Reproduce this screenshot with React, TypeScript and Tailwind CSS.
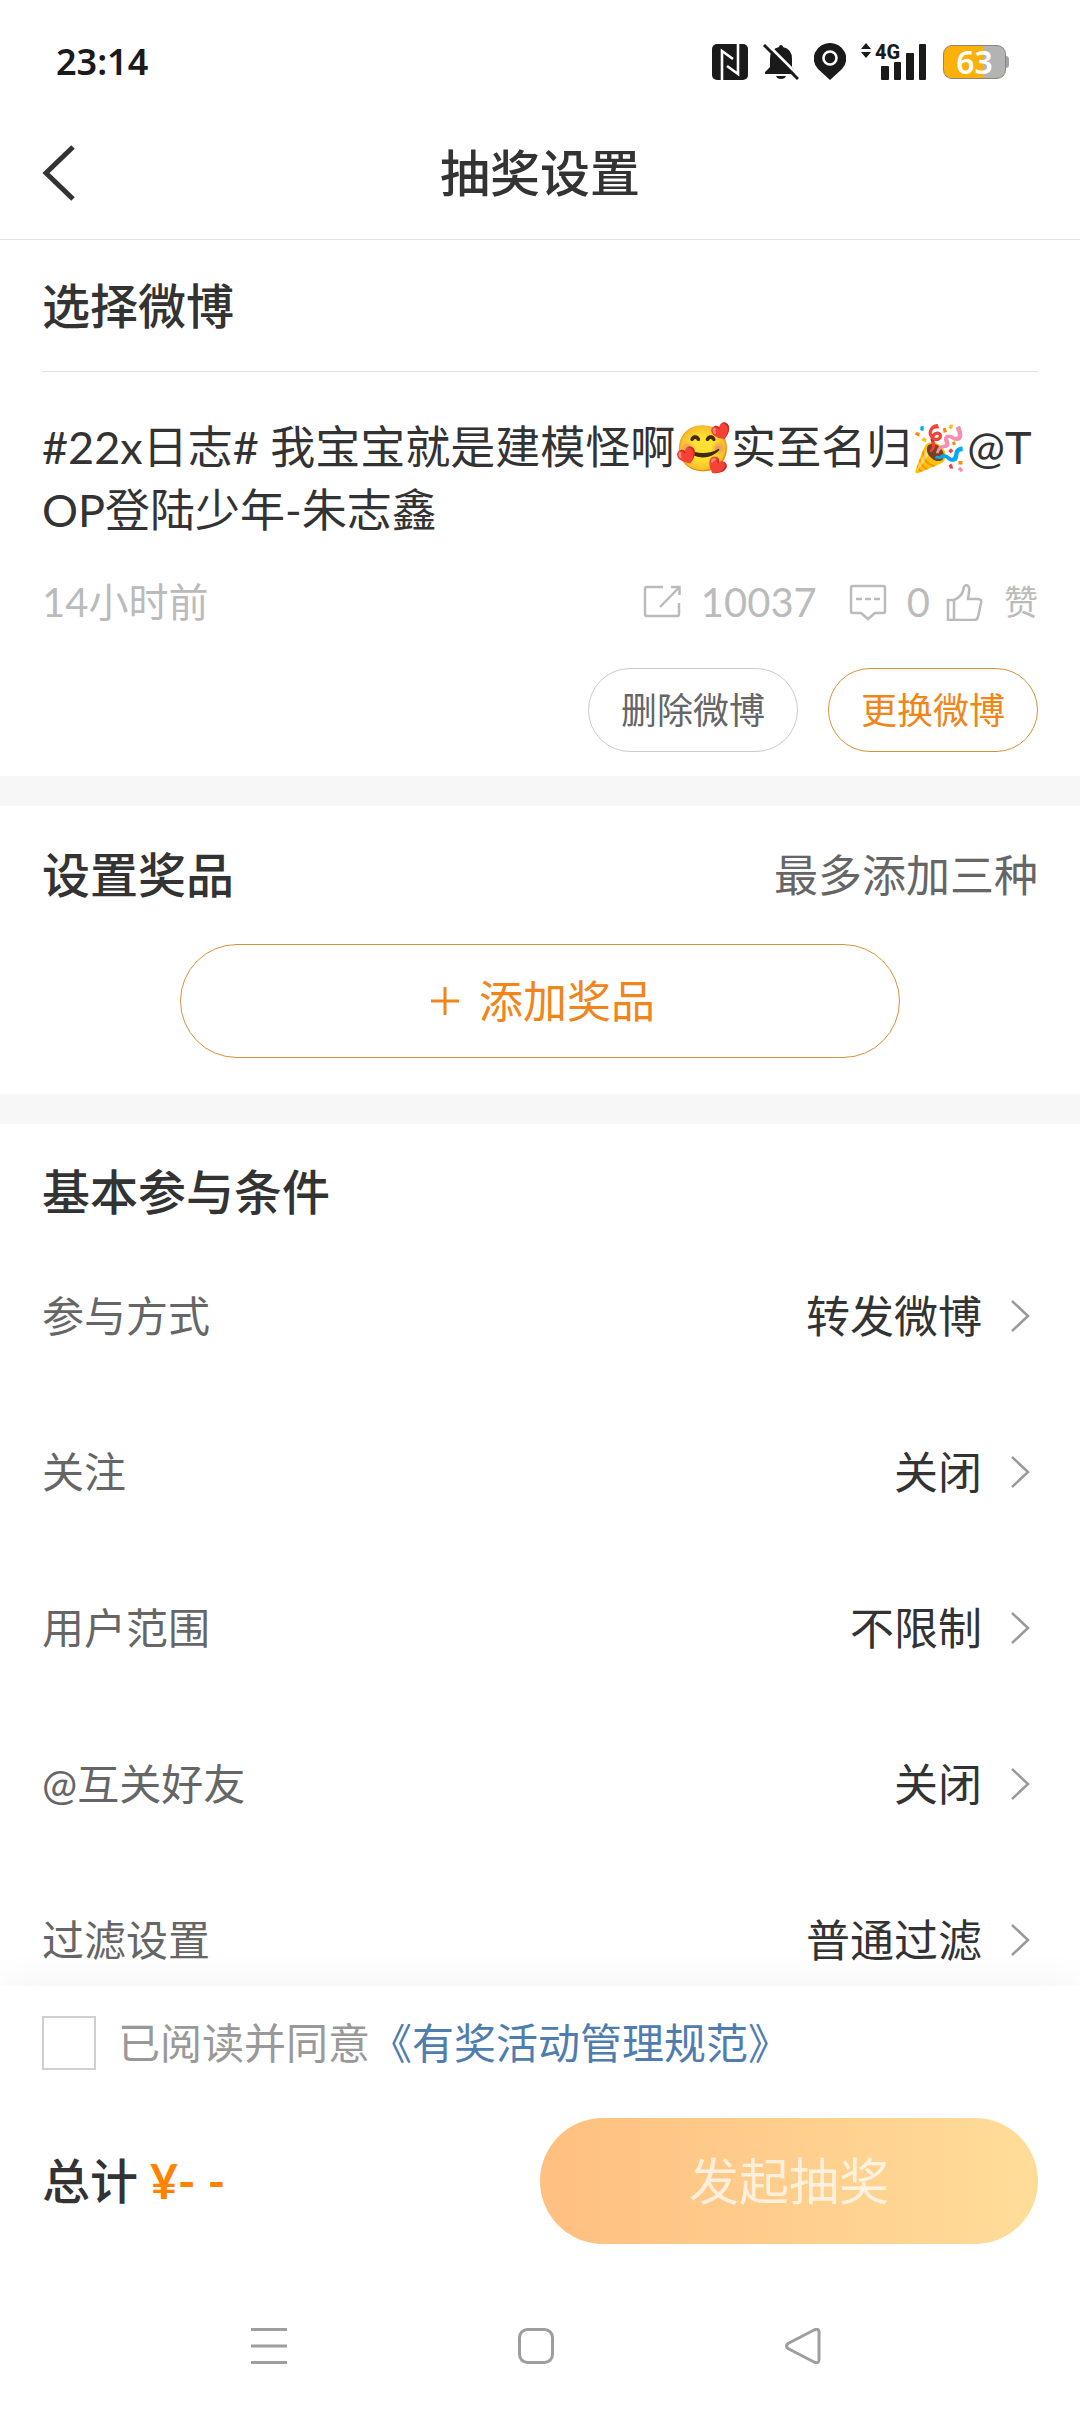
import type { ReactNode } from "react";

type SettingRowProps = {
  label: string;
  value: string;
};

const settings: SettingRowProps[] = [
  { label: "参与方式", value: "转发微博" },
  { label: "关注", value: "关闭" },
  { label: "用户范围", value: "不限制" },
  { label: "@互关好友", value: "关闭" },
  { label: "过滤设置", value: "普通过滤" },
];

function StatusBar() {
  return (
    <div className="flex h-[107px] items-center justify-between pt-4 pr-[71px] pl-14 text-[#1a1a1a]">
      <span className="font-['Noto_Sans'] text-[36px] leading-none font-semibold">23:14</span>
      <div className="flex items-center gap-[15px]">
        <svg width="36" height="36" viewBox="0 0 36 36" aria-label="NFC">
          <rect width="36" height="36" rx="5" fill="currentColor" />
          <path d="M10 36V7L21 15M26 0V30L15 22" fill="none" stroke="#fff" strokeWidth="2.6" />
        </svg>
        <svg width="36" height="36" viewBox="0 0 36 36" aria-label="静音">
          <path
            d="M18 1q2 0 2 2 9 2 9 12v8l4 5v2H2v-2l5-5v-8Q7 5 16 3q0-2 2-2zM13 32h10q-1 3-5 3t-5-3z"
            fill="currentColor"
          />
          <path d="M3 -1L37 33" stroke="#fff" strokeWidth="3" />
          <path d="M1 1L35 35" stroke="currentColor" strokeWidth="3" />
        </svg>
        <svg width="32" height="37" viewBox="0 0 32 37" aria-label="定位">
          <path d="M16 0a16 15.500 0 0 1 12 26L16 37 4 26A16 15.500 0 0 1 16 0z" fill="currentColor" />
          <circle cx="16" cy="15" r="6.500" fill="none" stroke="#fff" strokeWidth="2.600" />
        </svg>
        <svg width="67" height="57" viewBox="0 -10 67 57" aria-label="4G" fill="currentColor">
          <path d="M0 6L5 0l5 6zM0 9h10l-5 6z" />
          <text x="14" y="16" fontFamily="Roboto, sans-serif" fontSize="20" fontWeight="800">
            4G
          </text>
          <rect x="20" y="23" width="8" height="14" rx="1" />
          <rect x="33" y="19" width="7" height="18" rx="1" />
          <rect x="45" y="10" width="8" height="27" rx="1" />
          <rect x="58" y="1" width="7" height="36" rx="1" />
        </svg>
        <div className="flex items-center">
          <span className="flex h-[34px] w-[63px] items-center justify-center rounded-[9px] border border-[#8f8671] bg-[linear-gradient(to_right,#fcb10a_66%,#b3b3b3_66%)] font-['Noto_Sans'] text-[32px] leading-none font-semibold text-white">
            63
          </span>
          <span className="h-3 w-[3px] rounded-r-sm bg-[#a3a3a3]" />
        </div>
      </div>
    </div>
  );
}

function NavHeader() {
  return (
    <header className="grid h-[133px] grid-cols-[1fr_auto_1fr] items-center border-b border-[#e3e3e3] px-[42px]">
      <button type="button" aria-label="返回" className="w-9">
        <svg width="34" height="56" viewBox="0 0 34 56" fill="none" stroke="#333" strokeWidth="5">
          <path d="M31 2L4 28l27 26" />
        </svg>
      </button>
      <h1 className="text-[50px] leading-none font-medium">抽奖设置</h1>
    </header>
  );
}

function Stat({ icon, children }: { icon: ReactNode; children: ReactNode }) {
  return (
    <span className="flex items-center gap-5">
      <svg width="38" height="38" viewBox="0 0 38 38" fill="none" stroke="currentColor" strokeWidth="2.500">
        {icon}
      </svg>
      {children}
    </span>
  );
}

function SelectedPost() {
  return (
    <section className="px-[42px] pb-6">
      <h2 className="flex h-[132px] items-center border-b border-[#e3e3e3] text-[48px] leading-none font-medium">选择微博</h2>
      <p className="mt-[44px] text-[45px] leading-[63px] break-all">
        #22x日志# 我宝宝就是建模怪啊🥰实至名归🎉@TOP登陆少年-朱志鑫
      </p>
      <div className="mt-[30px] flex h-[60px] items-center justify-between text-[40px] leading-none text-[#bbb]">
        <span>14小时前</span>
        <div className="flex items-center">
          <Stat icon={<path d="M20 4H4Q2 4 2 6V31Q2 33 4 33H34Q36 33 36 31V20M28 4H36.500V12M36.500 4L17 24" />}>
            <span>10037</span>
          </Stat>
          <span className="ml-8">
            <Stat
              icon={
                <>
                  <path d="M4 3H34Q36 3 36 5V28Q36 30 34 30H26L19 36L12 30H4Q2 30 2 28V5Q2 3 4 3z" />
                  <path d="M7 16h6M16 16h6M25 16h6" />
                </>
              }
            >
              <span>0</span>
            </Stat>
          </span>
          <span className="ml-4">
            <Stat
              icon={<path d="M8 17Q15 14 17 8L18 4Q20 1 22 3Q24 5 23 9L22 16H32Q36 16 35 20L32 34Q31 37 29 37H2V17H8V37" />}
            >
              <span className="text-[34px]">赞</span>
            </Stat>
          </span>
        </div>
      </div>
      <div className="mt-9 flex justify-end gap-[30px] text-[36px] leading-none">
        <button type="button" className="h-[84px] w-[210px] rounded-full border border-[#ccc] text-[#666]">
          删除微博
        </button>
        <button type="button" className="h-[84px] w-[210px] rounded-full border border-[#d9903a] text-[#f08519]">
          更换微博
        </button>
      </div>
    </section>
  );
}

function PrizeSection() {
  return (
    <section className="border-t-[30px] border-[#f7f7f7] px-[42px] pb-9">
      <div className="flex h-[138px] items-center justify-between leading-none">
        <h2 className="text-[48px] font-medium">设置奖品</h2>
        <span className="text-[44px] text-[#666]">最多添加三种</span>
      </div>
      <button
        type="button"
        className="mx-auto flex h-[114px] w-[72.300%] items-center justify-center gap-5 rounded-full border border-[#d9903a] pl-1.5 text-[44px] leading-none text-[#f08519]"
      >
        <svg width="28" height="28" viewBox="0 0 28 28" stroke="currentColor" strokeWidth="3" aria-hidden>
          <path d="M14 0v28M0 14h28" />
        </svg>
        添加奖品
      </button>
    </section>
  );
}

function SettingRow({ label, value }: SettingRowProps) {
  return (
    <button type="button" className="flex h-[156px] w-full items-center justify-between pr-2 leading-none">
      <span className="text-[42px] text-[#666]">{label}</span>
      <span className="flex items-center gap-7 text-[44px]">
        {value}
        <svg width="20" height="32" viewBox="0 0 20 32" fill="none" stroke="#999" strokeWidth="2.500" aria-hidden>
          <path d="M2 1l16 15L2 31" />
        </svg>
      </span>
    </button>
  );
}

function ConditionSection() {
  return (
    <section className="border-t-[30px] border-[#f7f7f7] px-[42px] pt-[22px]">
      <h2 className="flex h-[92px] items-center text-[48px] leading-none font-medium">基本参与条件</h2>
      {settings.map((item) => (
        <SettingRow key={item.label} {...item} />
      ))}
    </section>
  );
}

function Footer() {
  return (
    <footer className="relative bg-white px-[42px] pt-[30px] pb-9 shadow-[0_0_40px_rgba(0,0,0,0.06)]">
      <div className="flex items-center gap-[22px] text-[42px] leading-none text-[#999]">
        <input id="agree" type="checkbox" className="size-[54px] shrink-0 appearance-none border-2 border-[#d0d0d0] checked:bg-[#f08519]" />
        <div>
          <label htmlFor="agree">已阅读并同意</label>
          <a href="#rules" className="text-[#507daf]">
            《有奖活动管理规范》
          </a>
        </div>
      </div>
      <div className="mt-12 flex items-center justify-between">
        <p className="flex items-center gap-3 text-[48px] leading-none font-medium">
          总计
          <span className="font-bold text-[#ff8200]">¥- -</span>
        </p>
        <button
          type="button"
          className="h-[126px] w-1/2 rounded-full bg-linear-to-r from-[#ffbf80] to-[#ffdd99] text-[50px] leading-none text-white/70"
        >
          发起抽奖
        </button>
      </div>
    </footer>
  );
}

function SystemNav() {
  return (
    <nav className="relative flex h-[132px] items-center justify-center gap-[231px] bg-white pr-2 text-[#9e9e9e]">
      <button type="button" aria-label="最近任务">
        <svg width="36" height="36" viewBox="0 0 36 36" stroke="currentColor" strokeWidth="3">
          <path d="M0 1.500h36M0 18h36M0 34.500h36" />
        </svg>
      </button>
      <button type="button" aria-label="主屏幕">
        <svg width="36" height="36" viewBox="0 0 36 36" fill="none" stroke="currentColor" strokeWidth="3">
          <rect x="1.500" y="1.500" width="33" height="33" rx="8" />
        </svg>
      </button>
      <button type="button" aria-label="返回上一级">
        <svg width="36" height="36" viewBox="0 0 36 36" fill="none" stroke="currentColor" strokeWidth="3">
          <path d="M3 15.500L29 2Q34 0 34 4V32Q34 36 29 34L3 20.500Q0 18 3 15.500z" />
        </svg>
      </button>
    </nav>
  );
}

export default function App() {
  return (
    <div className="flex h-screen flex-col bg-white font-[Lato,'Noto_Sans_CJK_SC',sans-serif] text-[#333]">
      <StatusBar />
      <NavHeader />
      <main className="min-h-0 flex-1 overflow-y-auto [scrollbar-width:none]">
        <SelectedPost />
        <PrizeSection />
        <ConditionSection />
      </main>
      <Footer />
      <SystemNav />
    </div>
  );
}
